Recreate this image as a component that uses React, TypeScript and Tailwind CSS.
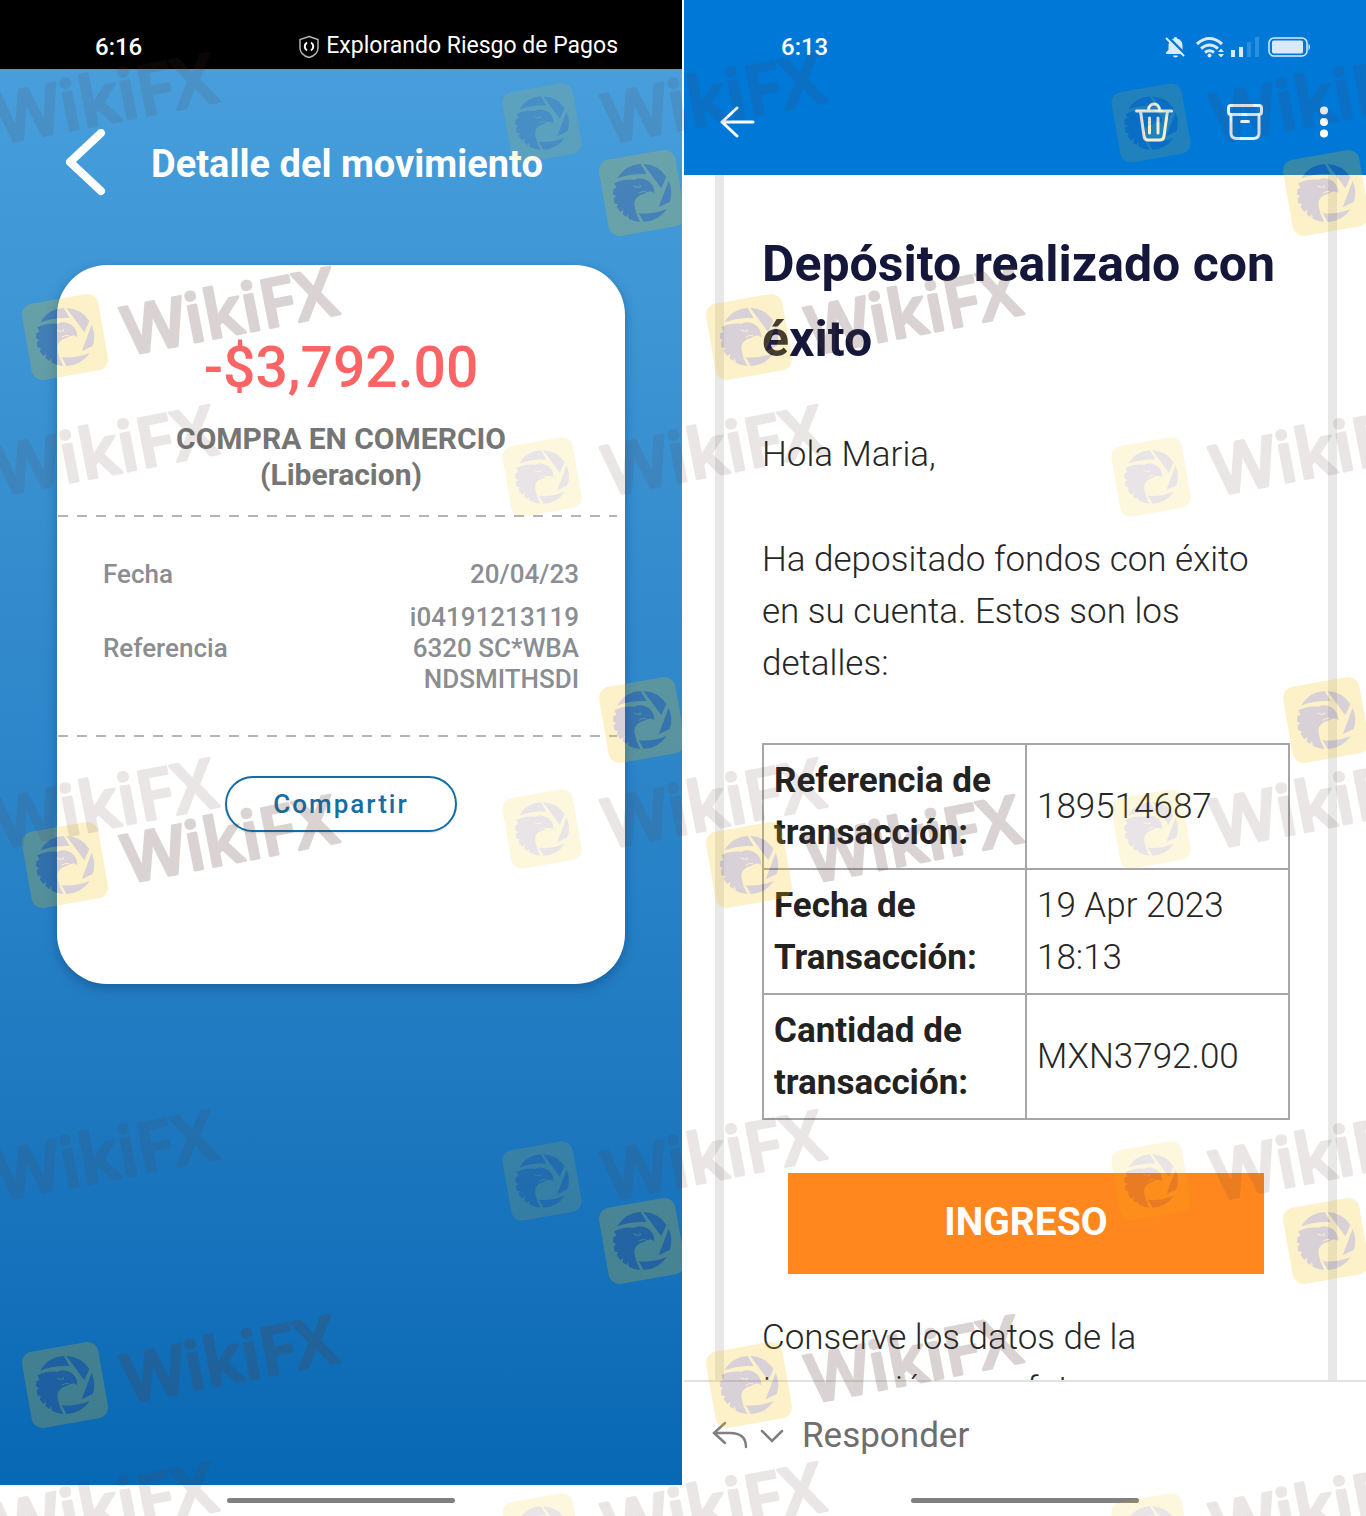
import type { ReactNode } from "react";

type MarkPos = { x: number; y: number };

const FAINT_LOGOS: MarkPos[] = [123, 477, 829, 1181, 1533].flatMap((y) => [
  { x: 542, y },
  { x: 1151, y },
]);
const FAINT_WORDS: MarkPos[] = [96, 448, 801, 1153, 1505].flatMap((y) => [
  { x: 105, y },
  { x: 713, y },
  { x: 1321, y },
]);
const STRONG_LOGOS: MarkPos[] = [
  { x: 65, y: 337 },
  { x: 65, y: 865 },
  { x: 65, y: 1385 },
  { x: 642, y: 193 },
  { x: 642, y: 720 },
  { x: 642, y: 1241 },
];
const STRONG_WORDS: MarkPos[] = [
  { x: 229, y: 309 },
  { x: 229, y: 837 },
  { x: 229, y: 1357 },
];

const ROWS = [
  { label: "Referencia de transacción:", value: "189514687" },
  { label: "Fecha de Transacción:", value: "19 Apr 2023 18:13" },
  { label: "Cantidad de transacción:", value: "MXN3792.00" },
];

function EagleLogo({ x, y, size, opacity }: MarkPos & { size: number; opacity: number }) {
  return (
    <g transform={`translate(${x} ${y}) scale(${size / 264}) translate(-134 -147)`} opacity={opacity}>
      <rect x="18" y="31" width="232" height="232" rx="34" fill="#f2c30c" transform="rotate(-10 134 147)" />
      <g fill="#553450">
        <path d="M60 103 A87 87 0 0 1 130 60 L148 90 Q100 88 60 103 Z" />
        <path d="M138 60 A87 87 0 0 1 207 99 L192 133 Z" />
        <path d="M214 110 A87 87 0 0 1 217 174 L184 190 Z" />
        <path d="M124 208 Q165 212 208 195 A87 87 0 0 1 139 234 Z" />
        <path d="M51 118 Q75 104 112 107 Q128 98 149 108 Q172 120 171 148 Q163 140 150 144 Q138 152 128 154 Q108 164 112 188 Q117 214 129 234 A87 87 0 0 1 94 224 L92 210 L87 219 L76 211 L78 197 L69 205 L58 189 L62 181 L51 178 L49 163 L56 157 L47 151 L48 136 L57 131 Z" />
      </g>
      <path d="M109 126 Q120 132 130 129 L128 124 M124 148 Q134 140 146 143" stroke="#f2c30c" strokeWidth="3" fill="none" />
    </g>
  );
}

function Word({ x, y, size, opacity }: MarkPos & { size: number; opacity: number }) {
  return (
    <g opacity={opacity}>
      <text
        x={x}
        y={y}
        transform={`rotate(-11 ${x} ${y})`}
        textAnchor="middle"
        dominantBaseline="central"
        fontSize={size}
        strokeWidth="3"
        strokeLinejoin="round"
        className="fill-[#5a3c3a] stroke-[#5a3c3a] font-['Open_Sans',sans-serif] font-semibold"
      >
        WikiFX
      </text>
    </g>
  );
}

function PanelMarks() {
  return (
    <svg aria-hidden="true" className="pointer-events-none absolute inset-0 h-full w-full">
      {STRONG_LOGOS.map((p) => (
        <EagleLogo key={`${p.x}-${p.y}`} {...p} size={88} opacity={0.22} />
      ))}
      {STRONG_WORDS.map((p) => (
        <Word key={p.y} {...p} size={67} opacity={0.22} />
      ))}
    </svg>
  );
}

function PageMarks() {
  return (
    <svg aria-hidden="true" className="pointer-events-none absolute inset-0 h-full w-full">
      {FAINT_LOGOS.map((p) => (
        <EagleLogo key={`${p.x}-${p.y}`} {...p} size={81} opacity={0.13} />
      ))}
      {FAINT_WORDS.map((p) => (
        <Word key={`${p.x}-${p.y}`} {...p} size={69} opacity={0.12} />
      ))}
    </svg>
  );
}

function Dashes() {
  return (
    <div className="mr-2 ml-px h-0.5 bg-[repeating-linear-gradient(90deg,#b4b4b4_0_10px,transparent_10px_19px)]" />
  );
}

function Detail({ label, children }: { label: string; children: ReactNode }) {
  return (
    <div className="flex items-center justify-between">
      <dt>{label}</dt>
      <dd className="w-44 text-right break-all">{children}</dd>
    </div>
  );
}

function HomeBar() {
  return <div className="mx-auto h-[5px] w-1/3 rounded-full bg-[#808080]" />;
}

function MovementScreen() {
  return (
    <section className="relative flex flex-col overflow-hidden bg-white">
      <div className="flex h-[69px] items-center justify-between bg-black pt-6 pr-16 pl-[95px] text-[23px] text-white">
        <span className="text-2xl font-medium">6:16</span>
        <span className="flex items-center gap-1.5">
          <svg width="22" height="24" viewBox="0 0 22 24" fill="none" stroke="#b5b5b5" strokeWidth="1.5">
            <path d="M11 1.5 L20 4.5 V13 C20 18 16 21 11 22.5 C6 21 2 18 2 13 V4.5 Z" />
            <path d="M9 7.5 C6 9.5 6 13.5 9 15.5 M13 7.5 C16 9.5 16 13.5 13 15.5" stroke="#fff" strokeWidth="2" />
          </svg>
          Explorando Riesgo de Pagos
        </span>
      </div>
      <main className="flex flex-1 flex-col bg-linear-to-b from-[#479edb] via-[#2680c5] via-60% to-[#0768b4] px-[57px]">
        <header className="flex h-[196px] items-center pb-1.5">
          <button type="button" aria-label="Volver" className="ml-2">
            <svg width="42" height="70" viewBox="0 3 42 70" fill="none" stroke="#fff" strokeWidth="8" strokeLinecap="round" strokeLinejoin="round">
              <path d="M36 7 L5 36 L36 65" />
            </svg>
          </button>
          <h1 className="ml-11 text-[38px] font-bold whitespace-nowrap text-white">Detalle del movimiento</h1>
        </header>
        <article className="h-[719px] rounded-[50px] bg-white shadow-[0_4px_12px_rgba(0,40,90,0.35)]">
          <p className="pt-[73px] text-center text-[57px] leading-[60px] font-medium text-[#fa6464]">-$3,792.00</p>
          <h2 className="mt-[23px] mb-[22px] text-center text-[30px] leading-9 font-bold text-[#757575]">
            COMPRA EN COMERCIO
            <br />
            (Liberacion)
          </h2>
          <Dashes />
          <dl className="mx-[46px] flex h-[218px] flex-col justify-center gap-3 pt-0.5 text-[26px] leading-[31px] font-medium text-[#8a8d91]">
            <Detail label="Fecha">20/04/23</Detail>
            <Detail label="Referencia">i041912131196320 SC*WBANDSMITHSDI</Detail>
          </dl>
          <Dashes />
          <button
            type="button"
            className="mx-auto mt-[39px] block h-14 w-[232px] rounded-full border-2 border-[#146ea5] bg-white text-[26px] font-medium tracking-[2px] text-[#146ea5] shadow-sm"
          >
            Compartir
          </button>
        </article>
      </main>
      <footer className="flex h-[31px] items-center">
        <HomeBar />
      </footer>
      <PanelMarks />
    </section>
  );
}

function StatusIcons() {
  return (
    <svg width="148" height="24" viewBox="0 0 148 24" fill="#d9eaff">
      {/* muted bell */}
      <path d="M11.500 2 C12.500 2 13 2.500 13 3.500 C17 4.500 18.500 7.500 18.500 11 V15 L21 19 H2 V17.500 L4.500 15 V11 C4.500 7 6.500 4.200 10 3.500 C10 2.500 10.500 2 11.500 2 Z M9 20.500 H14 A2.500 2 0 0 1 9 20.500 Z" />
      <path d="M3.500 1.500 L21.500 19.500" stroke="#0078d7" strokeWidth="2.500" />
      <path d="M2 3 L20 21" stroke="#d9eaff" strokeWidth="2" />
      {/* wifi */}
      <g fill="none" stroke="#d9eaff" strokeWidth="3">
        <path d="M33 9 Q45.500 -2 58 9" />
        <path d="M37 13.500 Q45.500 6.500 54 13.500" />
        <path d="M41 17.500 Q45.500 14 50 17.500" />
      </g>
      <circle cx="45.500" cy="20.500" r="2" />
      <path d="M54 17 L57 13.500 L60 17 Z M54 19 L57 22.500 L60 19 Z" />
      {/* signal */}
      <rect x="67" y="15" width="4" height="7" />
      <rect x="75" y="12" width="4" height="10" />
      <rect x="83" y="7" width="4" height="15" opacity="0.2" />
      <rect x="91" y="2" width="4" height="20" opacity="0.2" />
      {/* battery */}
      <rect x="105" y="3" width="38" height="18" rx="5" fill="none" stroke="#d9eaff" strokeWidth="1.5" />
      <rect x="108" y="5.500" width="31" height="13" rx="2" />
      <path d="M144.500 8.500 Q147.500 12 144.500 15.500 Z" />
    </svg>
  );
}

function MailScreen() {
  return (
    <section className="relative flex h-[1516px] flex-col overflow-hidden bg-white">
      <header className="h-[175px] shrink-0 bg-[#0078d7] text-white">
        <div className="flex h-[69px] items-center justify-between pt-6 pr-[54px] pl-[97px] text-2xl font-medium">
          <span>6:13</span>
          <StatusIcons />
        </div>
        <div className="flex h-[106px] items-center pr-[38px] pl-9">
          <button type="button" aria-label="Atrás" className="mr-auto">
            <svg width="35" height="32" viewBox="0 0 35 32" fill="none" stroke="#fff" strokeWidth="3" strokeLinecap="round" strokeLinejoin="round">
              <path d="M17 2 L2 16 L17 30 M2 16 H33" />
            </svg>
          </button>
          <button type="button" aria-label="Eliminar">
            <svg width="38" height="40" viewBox="0 0 38 40" fill="none" stroke="#f4f6ee" strokeWidth="3" strokeLinecap="round" strokeLinejoin="round">
              <path d="M1.500 9 H36.500 M13.500 8 C13.500 0 24.500 0 24.500 8 M5.500 9 L9 34 Q9.500 38 13 38 H25 Q28.500 38 29 34 L32.500 9 M14.500 16 V31 M23 16 V31" />
            </svg>
          </button>
          <button type="button" aria-label="Archivar" className="ml-[54px]">
            <svg width="36" height="36" viewBox="0 0 36 36" fill="none" stroke="#eaf3fc" strokeWidth="3" strokeLinecap="round">
              <rect x="1.500" y="1.500" width="33" height="9" rx="2.500" />
              <path d="M4 11 V29 Q4 34.500 9.500 34.500 H26.500 Q32 34.500 32 29 V11 M14.500 17.500 H21.500" />
            </svg>
          </button>
          <button type="button" aria-label="Más opciones" className="ml-[57px]">
            <svg width="8" height="32" viewBox="0 0 8 32" fill="#fff">
              <circle cx="4" cy="4.500" r="4" />
              <circle cx="4" cy="16" r="4" />
              <circle cx="4" cy="27.500" r="4" />
            </svg>
          </button>
        </div>
      </header>
      <main className="mr-[29px] ml-[31px] flex-1 overflow-hidden border-x-[9px] border-[#e8e8e8] px-[38px] pt-[52px] text-[35px] leading-[52px] font-light text-[#262626]">
        <h1 className="text-[50px] leading-[75px] font-bold text-[#14173a]">Depósito realizado con éxito</h1>
        <p className="mt-[52px]">Hola Maria,</p>
        <p className="mt-[53px]">Ha depositado fondos con éxito en su cuenta. Estos son los detalles:</p>
        <table className="mt-[53px] w-full table-fixed border-collapse text-left">
          <tbody>
            {ROWS.map((row) => (
              <tr key={row.label}>
                <th scope="row" className="border-2 border-[#a6a6a6] px-2.5 pt-2.5 pb-[9px] font-bold text-[#222]">
                  {row.label}
                </th>
                <td className="border-2 border-[#a6a6a6] px-2.5">{row.value}</td>
              </tr>
            ))}
          </tbody>
        </table>
        <a
          href="#ingreso"
          className="mx-[26px] mt-[53px] mb-[38px] flex h-[101px] items-center justify-center bg-[#ff871e] pb-1 text-[39px] font-bold text-white"
        >
          INGRESO
        </a>
        <p>
          Conserve los datos de la
          <br />
          transacción para futuras
        </p>
      </main>
      <footer className="flex h-[136px] shrink-0 flex-col border-t-2 border-[#e1e1e1] bg-white">
        <button type="button" className="flex h-[105px] items-center pt-1 pl-7 text-[35px] text-[#6e6e6e]">
          <svg width="36" height="28" viewBox="0 2 36 28" fill="none" stroke="#808080" strokeWidth="2.500" strokeLinecap="round" className="overflow-visible">
            <path d="M13 2 L2 12 L13 22 M2 12 H18 Q34 12 34 26" />
          </svg>
          <svg width="24" height="14" viewBox="0 1 24 14" fill="none" stroke="#808080" strokeWidth="2.500" strokeLinecap="round" className="mr-[18px] ml-3 overflow-visible">
            <path d="M2 2 L12 12 L22 2" />
          </svg>
          Responder
        </button>
        <div className="flex h-[27px] items-center">
          <HomeBar />
        </div>
      </footer>
      <PanelMarks />
    </section>
  );
}

export default function App() {
  return (
    <div className="relative grid min-h-screen grid-cols-2 gap-0.5 overflow-hidden bg-white font-[Roboto,sans-serif]">
      <MovementScreen />
      <MailScreen />
      <PageMarks />
    </div>
  );
}
